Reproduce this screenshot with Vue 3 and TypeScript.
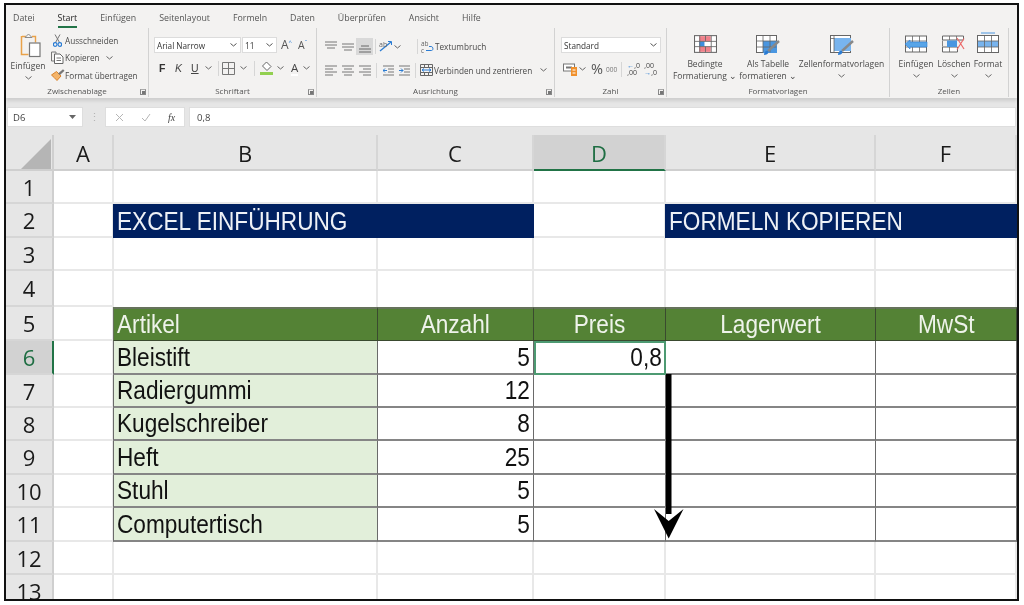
<script setup lang="ts">
const tabs = ['Datei', 'Start', 'Einfügen', 'Seitenlayout', 'Formeln', 'Daten', 'Überprüfen', 'Ansicht', 'Hilfe']
const cols = ['A', 'B', 'C', 'D', 'E', 'F']
const rowNums = [1, 2, 3, 4, 5, 6, 7, 8, 9, 10, 11, 12, 13]
const items: [string, number][] = [
  ['Bleistift', 5], ['Radiergummi', 12], ['Kugelschreiber', 8], ['Heft', 25], ['Stuhl', 5], ['Computertisch', 5],
]
function tableRow(r: number) { return r >= 6 && r <= 11 }
</script>

<template>
  <div class="page">
    <div class="frame">
      <div class="chrome">
        <nav class="tabs">
          <span v-for="t in tabs" :key="t" class="tab" :class="{ on: t === 'Start' }">{{ t }}</span>
        </nav>
        <div class="ribbon">
          <section class="grp g1">
            <div class="body clip">
              <div class="big paste">
                <svg class="pi" width="24" height="25" viewBox="0 0 24 25"><path d="M3 3.500h4M13 3.500h3.500v6" fill="none" stroke="#e9a24a" stroke-width="1.400"/><path d="M2.500 3v18.500h7" fill="none" stroke="#e9a24a" stroke-width="1.500"/><path d="M6 4.500 9.500 1l3.500 3.500z" fill="#f5f5f5" stroke="#8a8a8a"/><rect x="10.500" y="10" width="10.500" height="13.500" fill="#fff" stroke="#777" stroke-width="1.200"/></svg>
                <span class="lbl pl">Einfügen</span>
                <svg class="chev" width="7" height="4" viewBox="0 0 7 4"><path d="M.5.500l3 2.500 3-2.500" fill="none" stroke="#666"/></svg>
              </div>
              <div class="cliplist">
                <div class="cl"><svg width="9" height="13" viewBox="0 0 9 13"><path d="M2 .5l4.500 8M7 .5l-4.500 8" stroke="#777" fill="none"/><circle cx="2.200" cy="10.500" r="1.800" fill="none" stroke="#2b7cd3" stroke-width="1.200"/><circle cx="6.800" cy="10.500" r="1.800" fill="none" stroke="#2b7cd3" stroke-width="1.200"/></svg><span>Ausschneiden</span></div>
                <div class="cl"><svg width="13" height="13" viewBox="0 0 13 13"><path d="M5 2.500V1H.5v9H3" fill="none" stroke="#777"/><path d="M3.500 3h5.500l3 3v6.500H3.500z" fill="#fff" stroke="#666"/><path d="M5.500 7h4.500M5.500 9.500h4.500" stroke="#777"/></svg><span>Kopieren</span><svg class="cc" width="7" height="4" viewBox="0 0 7 4"><path d="M.5.500l3 2.500 3-2.500" fill="none" stroke="#666"/></svg></div>
                <div class="cl"><svg width="14" height="12" viewBox="0 0 14 12"><path d="M.5 6l5-3.500 4.500 4.500-4 4.500C4.500 9.500 2.500 8 .5 6z" fill="#f4b46a" stroke="#d9822b"/><path d="M7 4.500L12 .2l1.500 1.500L9 6" fill="#777"/></svg><span>Format übertragen</span></div>
              </div>
            </div>
            <footer class="glabel">Zwischenablage</footer>
            <i class="launch"></i>
          </section>

          <section class="grp g2">
            <div class="body two">
              <div class="row r2a">
                <div class="box fname"><span>Arial Narrow</span><svg width="7" height="4" viewBox="0 0 7 4"><path d="M.5.500l3 2.500 3-2.500" fill="none" stroke="#555"/></svg></div>
                <div class="box fsize"><span>11</span><svg width="7" height="4" viewBox="0 0 7 4"><path d="M.5.500l3 2.500 3-2.500" fill="none" stroke="#555"/></svg></div>
                <span class="aa big-a">A<sup>^</sup></span>
                <span class="aa small-a">A<sup>ˇ</sup></span>
              </div>
              <div class="row r2b">
                <b class="glyph f">F</b>
                <em class="glyph k">K</em>
                <span class="glyph u">U</span>
                <svg class="ch" width="7" height="4" viewBox="0 0 7 4"><path d="M.5.500l3 2.500 3-2.500" fill="none" stroke="#666"/></svg>
                <i class="vsep s1"></i>
                <svg class="bd" width="13" height="13" viewBox="0 0 13 13"><path d="M.5.500h12v12H.5zM6.500.500v12M.5 6.500h12" fill="none" stroke="#777"/></svg>
                <svg class="ch" width="7" height="4" viewBox="0 0 7 4"><path d="M.5.500l3 2.500 3-2.500" fill="none" stroke="#666"/></svg>
                <i class="vsep s2"></i>
                <svg class="fill" width="13" height="14" viewBox="0 0 13 14"><path d="M6.500 1l4.500 4.500-4 4-4.500-4.500z" fill="#fff" stroke="#666"/><rect x="0" y="11" width="13" height="3" fill="#92d050"/></svg>
                <svg class="ch" width="7" height="4" viewBox="0 0 7 4"><path d="M.5.500l3 2.500 3-2.500" fill="none" stroke="#666"/></svg>
                <span class="fontcol">A</span>
                <svg class="ch" width="7" height="4" viewBox="0 0 7 4"><path d="M.5.500l3 2.500 3-2.500" fill="none" stroke="#666"/></svg>
              </div>
            </div>
            <footer class="glabel">Schriftart</footer>
            <i class="launch"></i>
          </section>

          <section class="grp g3">
            <div class="body two">
              <div class="row r3a">
                <svg class="al" width="12" height="12" viewBox="0 0 12 12"><path d="M0 1h12M0 4h12M2 7h8" stroke="#777"/></svg>
                <svg class="al" width="12" height="12" viewBox="0 0 12 12"><path d="M0 3h12M0 6h12M2 9h8" stroke="#777"/></svg>
                <span class="alon"><svg width="12" height="12" viewBox="0 0 12 12"><path d="M2 5h8M0 8h12M0 11h12" stroke="#666"/></svg></span>
                <i class="vsep s3"></i>
                <svg class="or" width="14" height="13" viewBox="0 0 14 13"><path d="M1 11L12 2" stroke="#2b7cd3" stroke-width="1.300"/><path d="M9 1.500h3.500V5" fill="none" stroke="#2b7cd3"/><text x="0" y="7" font-size="7" fill="#666" font-family="Open Sans">ab</text></svg>
                <svg class="ch" width="7" height="4" viewBox="0 0 7 4"><path d="M.5.500l3 2.500 3-2.500" fill="none" stroke="#666"/></svg>
                <i class="vsep s4"></i>
                <svg class="wr" width="13" height="14" viewBox="0 0 13 14"><text x="0" y="6" font-size="6.500" fill="#666" font-family="Open Sans">ab</text><text x="0" y="13" font-size="6.500" fill="#666" font-family="Open Sans">c</text><path d="M5 10.500h5.500c2 0 2-4-.5-4H8" fill="none" stroke="#2b7cd3"/></svg>
                <span class="rt">Textumbruch</span>
              </div>
              <div class="row r3b">
                <svg class="al" width="12" height="11" viewBox="0 0 12 11"><path d="M0 1h12M0 4h8M0 7h12M0 10h8" stroke="#777"/></svg>
                <svg class="al" width="12" height="11" viewBox="0 0 12 11"><path d="M0 1h12M2 4h8M0 7h12M2 10h8" stroke="#777"/></svg>
                <svg class="al al3" width="12" height="11" viewBox="0 0 12 11"><path d="M0 1h12M4 4h8M0 7h12M4 10h8" stroke="#777"/></svg>
                <i class="vsep s5"></i>
                <svg class="ind" width="11" height="11" viewBox="0 0 11 11"><path d="M0 1h11M5 4h6M5 7h6M0 10h11" stroke="#777"/><path d="M4 5.500H0m2-2L0 5.500l2 2" fill="none" stroke="#2b7cd3"/></svg>
                <svg class="ind ind2" width="11" height="11" viewBox="0 0 11 11"><path d="M0 1h11M5 4h6M5 7h6M0 10h11" stroke="#777"/><path d="M0 5.500h4m-2-2l2 2-2 2" fill="none" stroke="#2b7cd3"/></svg>
                <i class="vsep s6"></i>
                <svg class="mg" width="13" height="12" viewBox="0 0 13 12"><path d="M.5.500h12v11H.5zM.5 3.500h12M.5 8.500h12M4.500.500v3M8.500.500v3M4.500 8.500v3M8.500 8.500v3" fill="none" stroke="#666"/><path d="M2 6h9M2 6l2-1.500M2 6l2 1.500M11 6L9 4.500M11 6L9 7.500" fill="none" stroke="#2b7cd3"/></svg>
                <span class="rt">Verbinden und zentrieren</span>
                <svg class="ch mch" width="7" height="4" viewBox="0 0 7 4"><path d="M.5.500l3 2.500 3-2.500" fill="none" stroke="#666"/></svg>
              </div>
            </div>
            <footer class="glabel">Ausrichtung</footer>
            <i class="launch"></i>
          </section>

          <section class="grp g4">
            <div class="body two">
              <div class="row r4a">
                <div class="box fmt"><span>Standard</span><svg width="7" height="4" viewBox="0 0 7 4"><path d="M.5.500l3 2.500 3-2.500" fill="none" stroke="#555"/></svg></div>
              </div>
              <div class="row r4b">
                <svg class="cur" width="15" height="13" viewBox="0 0 15 13"><rect x=".5" y="1" width="11" height="7" fill="#fff" stroke="#777"/><path d="M3 4.500h6" stroke="#777" stroke-width="2"/><rect x="8" y="4" width="6" height="9" fill="#f0902c"/><path d="M9.500 7h3M9.500 10h3" stroke="#fff"/></svg>
                <svg class="ch" width="7" height="4" viewBox="0 0 7 4"><path d="M.5.500l3 2.500 3-2.500" fill="none" stroke="#666"/></svg>
                <span class="pct">%</span>
                <span class="th">000</span>
                <i class="vsep s7"></i>
                <span class="dec"><b class="blue">←</b>,0<br>,00</span>
                <span class="dec d2">,00<br><b class="blue">→</b>,0</span>
              </div>
            </div>
            <footer class="glabel">Zahl</footer>
            <i class="launch"></i>
          </section>

          <section class="grp g5">
            <div class="body bigs">
              <div class="big b1">
                <div class="ico"><svg width="23" height="18" viewBox="0 0 22 17"><rect x=".5" y=".5" width="21" height="16" fill="#fff" stroke="#666"/><rect x="5" y="1" width="11" height="5" fill="#f0808a"/><rect x="5" y="6" width="5" height="5" fill="#3e8ede"/><rect x="5" y="11" width="11" height="5" fill="#f0808a"/><path d="M5.500.500v16M11 .500v5M11 11v5.500M16.500.500v16M.5 6h21M.5 11h21" fill="none" stroke="#666" stroke-width=".8"/></svg></div>
                <span class="lbl">Bedingte<br>Formatierung ⌄</span>
              </div>
              <div class="big b2">
                <div class="ico"><svg width="24" height="21" viewBox="0 0 24 21"><rect x=".5" y=".5" width="20" height="17" fill="#fff" stroke="#666"/><rect x="7" y="6" width="14" height="12" fill="#4a96e0"/><path d="M7 .500v17M14 .500v17M.5 6h20M.5 12h20" fill="none" stroke="#666" stroke-width=".8"/><path d="M23 6L12 16" stroke="#888" stroke-width="2.400"/><path d="M8 20c0-3 2-5 4-4 1 1 0 4-4 4z" fill="#2b7cd3"/></svg></div>
                <span class="lbl">Als Tabelle<br>formatieren ⌄</span>
              </div>
              <div class="big b3">
                <div class="ico"><svg width="24" height="21" viewBox="0 0 24 21"><rect x=".5" y=".5" width="20" height="17" fill="#fff" stroke="#666"/><rect x="4" y="3" width="17" height="13" fill="#78b4ee"/><path d="M23 6L12 16" stroke="#888" stroke-width="2.400"/><path d="M8 20c0-3 2-5 4-4 1 1 0 4-4 4z" fill="#2b7cd3"/><path d="M.5 3.500h4M4 .500v17" stroke="#666" stroke-width=".8"/></svg></div>
                <span class="lbl">Zellenformatvorlagen</span>
                <svg class="chev" width="7" height="4" viewBox="0 0 7 4"><path d="M.5.500l3 2.500 3-2.500" fill="none" stroke="#666"/></svg>
              </div>
            </div>
            <footer class="glabel">Formatvorlagen</footer>
          </section>

          <section class="grp g6">
            <div class="body bigs">
              <div class="big c1">
                <div class="ico"><svg width="24" height="18" viewBox="0 0 24 17"><rect x="1.500" y=".5" width="21" height="16" fill="#fff" stroke="#666"/><path d="M8.500.500v16M15.500.500v16M1.500 5.500h21M1.500 11.500h21" fill="none" stroke="#666" stroke-width=".8"/><path d="M1 8.500l5-4v2h17v5H6v2z" fill="#58a5e8" stroke="#2b7cd3" stroke-width=".6"/></svg></div>
                <span class="lbl">Einfügen</span>
                <svg class="chev" width="7" height="4" viewBox="0 0 7 4"><path d="M.5.500l3 2.500 3-2.500" fill="none" stroke="#666"/></svg>
              </div>
              <div class="big c2">
                <div class="ico"><svg width="24" height="18" viewBox="0 0 24 17"><path d="M.5.500h21v4h-21zM.5 11.500h15v5H.5z" fill="#fff" stroke="#666"/><path d="M7.500.500v4M14.500.500v4M7.500 11.500v5M.5 5v6" fill="none" stroke="#666" stroke-width=".8"/><rect x="5" y="5" width="10" height="6.500" fill="#4a96e0"/><path d="M15 2.500l7 11M22 3l-7 11" stroke="#ec6a6a" stroke-width="1.200"/></svg></div>
                <span class="lbl">Löschen</span>
                <svg class="chev" width="7" height="4" viewBox="0 0 7 4"><path d="M.5.500l3 2.500 3-2.500" fill="none" stroke="#666"/></svg>
              </div>
              <div class="big c3">
                <div class="ico up"><svg width="23" height="21" viewBox="0 0 23 21"><path d="M4 1h14" stroke="#4a96e0"/><rect x=".5" y="3.500" width="21" height="17" fill="#fff" stroke="#666"/><rect x="1" y="9" width="20" height="6" fill="#78b4ee"/><path d="M7.500 3.500v17M14.500 3.500v17M.5 9h21M.5 15h21" fill="none" stroke="#666" stroke-width=".8"/></svg></div>
                <span class="lbl">Format</span>
                <svg class="chev" width="7" height="4" viewBox="0 0 7 4"><path d="M.5.500l3 2.500 3-2.500" fill="none" stroke="#666"/></svg>
              </div>
            </div>
            <footer class="glabel">Zellen</footer>
          </section>
        </div>

        <div class="fbar">
          <div class="fbox namebox"><span>D6</span><svg width="7" height="4" viewBox="0 0 7 4"><path d="M0 0h7L3.500 4z" fill="#666"/></svg></div>
          <span class="dots">⋮</span>
          <div class="fbox fxbox">
            <svg width="9" height="9" viewBox="0 0 9 9"><path d="M1 1l7 7M8 1L1 8" stroke="#b5b5b5"/></svg>
            <svg width="10" height="9" viewBox="0 0 10 9"><path d="M1 5l3 3 5-7" fill="none" stroke="#b5b5b5"/></svg>
            <em class="fx">fx</em>
          </div>
          <div class="fbox input">0,8</div>
        </div>
      </div>

      <div class="sheet">
        <div class="hd corner"><svg width="30" height="30" viewBox="0 0 30 30"><path d="M30 0v30H0z" fill="#b5b5b5"/></svg></div>
        <div v-for="c in cols" :key="c" class="hd colh" :class="{ sel: c === 'D' }">{{ c }}</div>

        <template v-for="r in rowNums" :key="r">
          <div class="hd rowh" :class="{ sel: r === 6 }">{{ r }}</div>
          <div class="c"></div>

          <template v-if="r === 2">
            <div class="c banner wide"><span class="t">EXCEL EINFÜHRUNG</span></div>
            <div class="c"></div>
            <div class="c banner wide"><span class="t">FORMELN KOPIEREN</span></div>
          </template>

          <template v-else-if="r === 5">
            <div class="c th5 left tleft"><span class="t">Artikel</span></div>
            <div class="c th5"><span class="t mid">Anzahl</span></div>
            <div class="c th5"><span class="t mid">Preis</span></div>
            <div class="c th5"><span class="t mid">Lagerwert</span></div>
            <div class="c th5"><span class="t mid">MwSt</span></div>
          </template>

          <template v-else-if="tableRow(r)">
            <div class="c tb name tleft"><span class="t">{{ items[r - 6][0] }}</span></div>
            <div class="c tb num"><span class="t end">{{ items[r - 6][1] }}</span></div>
            <div class="c tb num" :class="{ active: r === 6 }"><span class="t end">{{ r === 6 ? '0,8' : '' }}</span></div>
            <div class="c tb"></div>
            <div class="c tb"></div>
          </template>

          <template v-else>
            <div class="c" :class="{ pre: r === 4 }"></div>
            <div class="c" :class="{ pre: r === 4 }"></div>
            <div class="c" :class="{ pre: r === 4 }"></div>
            <div class="c" :class="{ pre: r === 4 }"></div>
            <div class="c" :class="{ pre: r === 4 }"></div>
          </template>
        </template>

        <svg class="arrow" width="30" height="166" viewBox="0 0 30 166"><path d="M12 0h5.500v140H12z" fill="#000"/><path d="M0 135l14.700 29.500L29.500 135 14.700 147z" fill="#000"/></svg>
      </div>
    </div>
  </div>
</template>

<style>
html, body { margin: 0; background: #fff; }
</style>

<style scoped>
.page { width: 1024px; height: 605px; box-sizing: border-box; padding: 3px 5px 4px 4px; background: #fff; overflow: hidden; }
.frame { height: 100%; box-sizing: border-box; border: 2px solid #111; display: flex; flex-direction: column; overflow: hidden; background: #e6e6e6; }
.chrome { height: 130px; flex: none; background: #e6e6e6; font-family: "Open Sans", "Noto Sans", sans-serif; color: #4a4a4a; filter: blur(.35px); }

.tabs { height: 23px; display: flex; align-items: center; gap: 23px; padding-left: 7px; background: #f3f2f1; font-size: 8.800px; box-sizing: border-box; padding-top: 3px; }
.tab { position: relative; line-height: 14px; color: #555; }
.tab.on { color: #222; font-weight: 500; }
.tab.on::after { content: ""; position: absolute; left: 0; right: 0; bottom: -3px; height: 2px; background: #217346; }

.ribbon { height: 70px; display: flex; background: #f3f2f1; box-shadow: 0 3px 3px #cfcfcf; position: relative; }
.grp { position: relative; display: flex; flex-direction: column; box-sizing: border-box; border-right: 1px solid #d2d2d2; margin-bottom: 1px; }
.g1 { width: 143px; } .g2 { width: 168px; } .g3 { width: 238px; } .g4 { width: 112px; } .g5 { width: 223px; } .g6 { width: 119px; }
.body { flex: 1; min-height: 0; }
.glabel { height: 12px; line-height: 11px; text-align: center; font-size: 8px; color: #555; }
.launch { position: absolute; right: 2px; bottom: 2px; width: 6px; height: 6px; border: 1px solid #888; border-top-color: #aaa; box-sizing: border-box; }
.launch::after { content: ""; position: absolute; right: 0; bottom: 0; width: 3px; height: 3px; background: #777; }

.clip { display: flex; padding-left: 4px; }
.big { display: flex; flex-direction: column; align-items: center; }
.paste { width: 36px; padding-top: 5px; }
.pi { margin-left: 6px; margin-bottom: -1px; }
.lbl { font-size: 8.500px; line-height: 12px; text-align: center; white-space: nowrap; color: #4a4a4a; }
.pl { margin-top: 3px; }
.chev { margin-top: 4px; }
.cliplist { margin-left: 4px; padding-top: 4px; display: flex; flex-direction: column; gap: 1.500px; }
.cl { height: 16px; display: grid; grid-template-columns: 15px auto auto; justify-content: start; align-items: center; font-size: 8.200px; white-space: nowrap; }
.cl svg:first-child { justify-self: center; }
.cc { margin-left: 6px; }

.two { display: flex; flex-direction: column; }
.row { display: flex; align-items: center; }
.box { background: #fff; border: 1px solid #dcdcdc; box-sizing: border-box; height: 16px; display: flex; align-items: center; justify-content: space-between; padding: 0 3px 0 2px; font-size: 8.200px; color: #333; font-family: "Open Sans", sans-serif; }
.r2a { padding: 9px 0 0 5px; height: 16px; }
.fname { width: 87px; }
.fsize { width: 35px; margin-left: 1px; }
.aa { color: #555; line-height: 16px; }
.aa sup { color: #2b7cd3; font-size: 6px; vertical-align: 5px; line-height: 0; }
.big-a { font-size: 12px; margin-left: 4px; }
.small-a { font-size: 10.500px; margin-left: 6px; }
.r2b { margin-top: 7px; padding-left: 10px; height: 16px; }
.glyph { width: 16px; font-size: 10.500px; color: #444; font-family: "Liberation Sans", sans-serif; }
.f { color: #333; }
.u { text-decoration: underline; width: 13px; margin-right: 1px; }
.ch { flex: none; }
.vsep { width: 1px; height: 15px; background: #d6d6d6; display: block; flex: none; }
.s1 { margin: 0 3px 0 6px; }
.bd { margin-right: 5px; margin-left: 0; }
.s2 { margin: 0 5px 0 7px; }
.fill { margin-right: 4px; }
.fontcol { margin-left: 7px; margin-right: 5px; font-size: 11.500px; line-height: 13px; border-bottom: 2px solid #fff; color: #444; }

.r3a { padding: 10px 0 0 8px; height: 17px; }
.r3b { margin-top: 7px; padding-left: 8px; height: 16px; }
.al { margin-right: 5px; flex: none; }
.al3 { margin-right: 4px; }
.alon { width: 17px; height: 17px; background: #d9d9d9; display: flex; align-items: center; justify-content: center; margin-left: -3px; }
.s3 { margin: 0 3px 0 2px; }
.or { margin-right: 1px; flex: none; }
.s4 { margin: 0 3px 0 16px; }
.wr { margin-right: 0; }
.rt { font-size: 8.200px; white-space: nowrap; margin-left: 1px; }
.s5 { margin: 0 6px 0 1px; }
.ind { margin-right: 5px; }
.ind2 { margin-right: 5px; }
.s6 { margin: 0 4px 0 0; }
.mch { margin-left: 8px; }

.r4a { padding: 9px 0 0 6px; height: 16px; }
.fmt { width: 100px; }
.r4b { margin-top: 8px; padding-left: 8px; height: 16px; }
.cur { margin-right: 1px; }
.pct { margin-left: 5px; font-size: 14.500px; color: #555; line-height: 16px; }
.th { margin-left: 3px; font-size: 6.500px; color: #777; }
.s7 { margin: 0 5px 0 4px; }
.dec { font-size: 7px; line-height: 7px; width: 17px; color: #444; white-space: nowrap; }
.blue { color: #2b7cd3; font-weight: 400; }

.bigs { display: flex; padding-top: 7px; }
.ico { height: 23px; display: flex; align-items: flex-start; justify-content: center; }
.ico.up { margin-top: -3px; height: 26px; }
.bigs .lbl { margin-top: 0; }
.bigs .chev { margin-top: 4px; }
.b1 { width: 66px; margin-left: 5px; }
.b2 { width: 60px; }
.b3 { width: 87px; }
.c1 { width: 38px; margin-left: 7px; }
.c2 { width: 38px; }
.c3 { width: 30px; }

.fbar { height: 37px; box-sizing: border-box; padding-top: 9px; display: flex; align-items: flex-start; background: #e6e6e6; }
.fbox { height: 20px; background: #fff; box-sizing: border-box; border: 1px solid #dedede; display: flex; align-items: center; font-size: 9.500px; color: #444; }
.namebox { width: 76px; margin-left: 1px; padding: 0 6px 0 5px; justify-content: space-between; }
.dots { width: 22px; text-align: center; color: #b5b5b5; font-size: 11px; line-height: 20px; }
.fxbox { width: 80px; padding-left: 9px; gap: 17px; }
.fx { font-family: "Liberation Serif", serif; font-size: 10px; color: #444; }
.input { flex: 1; margin-left: 4px; margin-right: 1px; padding-left: 7px; }

.sheet { position: relative; flex: 1; min-height: 0; background: #fff; display: grid; grid-template-columns: 48px 60px 264px 156px 132px 210px 141px; grid-template-rows: 36px 33px 33.500px 33px 36px 34px 34px 33px 33px 34px 33px 34px 33px 33px; overflow: hidden; filter: blur(.3px); }
.hd { background: #e6e6e6; box-sizing: border-box; border-right: 2px solid #cfcfcf; border-bottom: 2px solid #cfcfcf; display: flex; align-items: center; justify-content: center; font-family: "Open Sans", "Noto Sans", sans-serif; font-size: 22px; color: #1a1a1a; }
.rowh { border-bottom-color: #d6d6d6; padding-top: 1px; }
.colh { border-right-color: #d6d6d6; padding: 2px 0 0 0; }
.corner { align-items: flex-end; justify-content: flex-end; padding: 0 1px 0 0; }
.corner svg { display: block; }
.hd.sel { background: #d2d2d2; color: #1f6e43; }
.colh.sel { border-bottom-color: #217346; }
.rowh.sel { border-right-color: #217346; }
.c { box-sizing: border-box; border-right: 2px solid #e8e8e8; border-bottom: 2px solid #e8e8e8; display: flex; align-items: center; padding-top: 1px; font-family: "Liberation Sans", sans-serif; font-size: 25px; color: #111; white-space: nowrap; overflow: hidden; min-width: 0; }
.c.pre { border-bottom: 0; }
.t { display: inline-block; transform: scaleX(.905); transform-origin: left center; }
.t.mid { transform-origin: center; }
.t.end { transform-origin: right center; }
.banner { background: #002060; color: #eef1f6; border: 0; padding-left: 4px; margin-left: -1px; }
.wide { grid-column: span 2; }
.th5 { background: #548235; color: #eef3ea; justify-content: center; border-top: 2px solid #66725c; border-right: 1.500px solid #3a4a2f; border-bottom: 1.500px solid #3a4a2f; padding-top: 0; }
.left { border-left: 1.500px solid #66725c; margin-left: -1px; }
.th5.tleft { justify-content: flex-start; }
.tb { border-right: 1.500px solid #6a6a6a; border-bottom: 2px solid #858585; }
.name { background: #e2efda; border-left: 1.500px solid #6a6a6a; margin-left: -1px; }
.tleft { padding-left: 3px; }
.num { justify-content: flex-end; padding-right: 3px; }
.active { outline: 2px solid #4d9a72; outline-offset: -2px; }
.arrow { position: absolute; left: 648px; top: 239px; }
</style>
